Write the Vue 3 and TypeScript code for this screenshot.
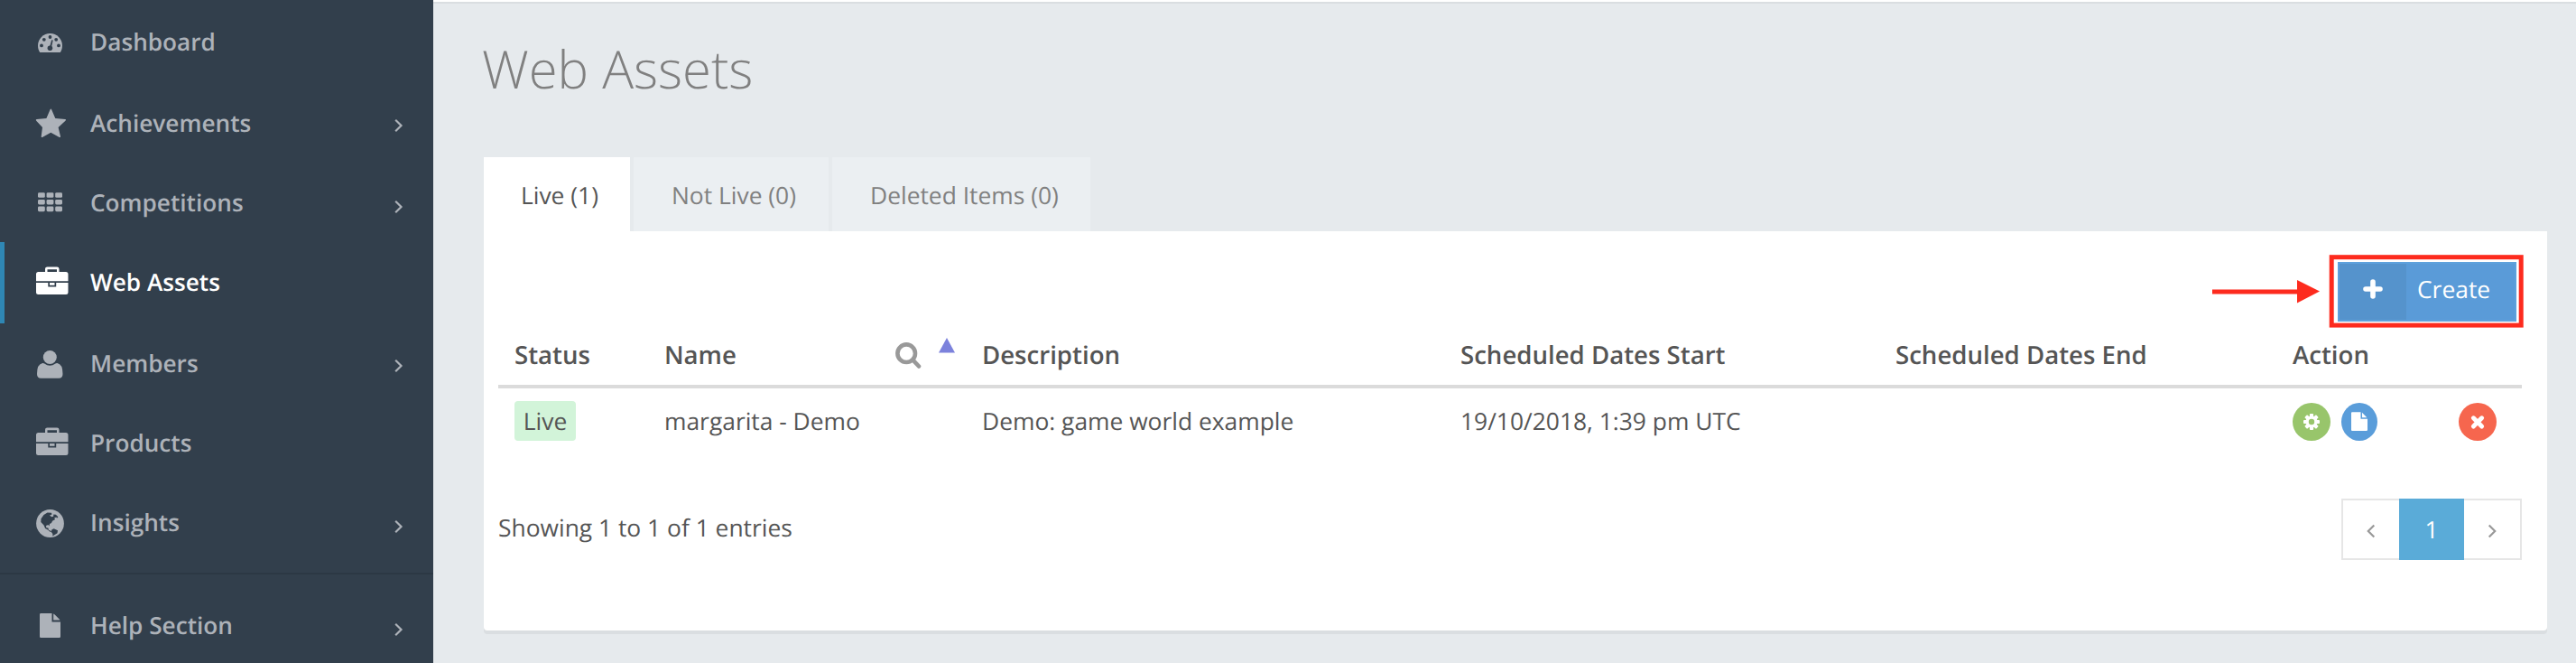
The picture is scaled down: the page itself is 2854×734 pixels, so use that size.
<script setup lang="ts">
interface NavItem {
  label: string
  icon: 'gauge' | 'star' | 'grid' | 'case' | 'user' | 'globe' | 'file'
  arrow?: 'high' | 'low'
  active?: boolean
  tall?: boolean
}

const mainNav: NavItem[] = [
  { label: 'Dashboard', icon: 'gauge', tall: true },
  { label: 'Achievements', icon: 'star', arrow: 'high' },
  { label: 'Competitions', icon: 'grid', arrow: 'low' },
  { label: 'Web Assets', icon: 'case', active: true, tall: true },
  { label: 'Members', icon: 'user', arrow: 'high' },
  { label: 'Products', icon: 'case' },
  { label: 'Insights', icon: 'globe', arrow: 'low' },
]
const helpNav: NavItem[] = [{ label: 'Help Section', icon: 'file', arrow: 'low' }]
const navGroups = [mainNav, helpNav]

const tabs = [
  { label: 'Live (1)', cls: 'live' },
  { label: 'Not Live (0)', cls: 'not-live' },
  { label: 'Deleted Items (0)', cls: 'deleted' },
]

const assets = [
  {
    status: 'Live',
    name: 'margarita - Demo',
    description: 'Demo: game world example',
    start: '19/10/2018, 1:39 pm UTC',
    end: '',
  },
]
const gridCells = [0, 1, 2].flatMap((r) => [0, 1, 2].map((c) => ({ x: 4 + c * 9.6, y: 9.2 + r * 7.7 })))
</script>

<template>
  <div class="app">
    <nav class="sidebar">
      <ul v-for="(group, g) in navGroups" :key="g" class="nav-group">
        <li
          v-for="item in group"
          :key="item.label"
          class="nav-item"
          :class="{ active: item.active, tall: item.tall }"
        >
          <svg class="nav-icon" viewBox="0 0 40 40" fill="currentColor">
            <template v-if="item.icon === 'gauge'">
              <path
                fill-rule="evenodd"
                d="M6.2 32C4.7 29.700 4 27.200 4 24.500 4 17 10 11 17.500 11S31 17 31 24.500c0 2.700-.7 5.200-2.200 7.500z"
              />
              <g class="cut">
                <circle cx="8" cy="24.400" r="1.900" />
                <circle cx="10.800" cy="17.800" r="1.900" />
                <circle cx="17.500" cy="15" r="1.900" />
                <circle cx="24.200" cy="17.800" r="1.900" />
                <circle cx="27" cy="24.400" r="1.900" />
                <circle cx="17.400" cy="27.300" r="2.800" />
                <path d="M19.200 18.200l1.500.4-1.700 8-2-.5z" />
              </g>
            </template>
            <path
              v-else-if="item.icon === 'star'"
              d="M18.300 4.500q.5 0 .8.800l4.200 9.700 11 1.100q1.300.4.400 1.300l-8.100 7.500 2.400 10.200q.1 1.400-1.200.8l-9.500-5.100-9.400 5.100q-1.300.6-1.200-.8l1.300-10.200-7-7.500q-.7-1 .6-1.300l10.800-1.100 4.200-9.700q.3-.8.700-.8z"
            />
            <template v-else-if="item.icon === 'grid'">
              <rect v-for="(c, i) in gridCells" :key="i" :x="c.x" :y="c.y" width="7.800" height="5.600" rx="1.400" />
            </template>
            <template v-else-if="item.icon === 'case'">
              <path
                fill-rule="evenodd"
                d="M12 9V5.800q0-2.300 2.300-2.300h10.900q2.300 0 2.300 2.300V9H35q2.500 0 2.500 2.500v7.800H2v-7.800Q2 9 4.500 9zm2.500 0H25V6.300H14.500z"
              />
              <path d="M2 21h13.300v4.500h8.900V21h13.300v10.500q0 2.500-2.500 2.500H4.500Q2 34 2 31.500z" />
              <rect x="17" y="21" width="5.500" height="2.800" />
            </template>
            <template v-else-if="item.icon === 'user'">
              <circle cx="17.300" cy="13.500" r="7.500" />
              <path
                d="M9.200 20q1-.2 2 .6 6.100 4.400 12.200 0 1-.8 2-.6 6.100 1 6.100 12 0 4.800-4.300 4.800H7.300Q3 36.800 3 32 3 21 9.200 20z"
              />
            </template>
            <template v-else-if="item.icon === 'globe'">
              <circle cx="17.500" cy="21.500" r="15.400" />
              <g class="cut">
                <path
                  d="M7.500 16.300l3-4.300 4-2.500 4.500.2.500 1.700-2.500 1.100 2.200 1.800 2-.5.100-2.300 2.600.2 2.500 2.600-1.400 1.400-.5-1.200-2.400 1 1 1.600-3 1.700-1.100 2.300-2 1-.5 2.400-1.100-1.600-2.400 1 .3 2.400 2.200.3.300 2.200 2.200.8 1.200 1.500-1.700-.4-2.600-2.300-2.800-1.400-1.500-3.500L7.300 20z"
                />
                <path d="M19.500 28.200l2.200-1 4.300 2-.5 3-5.200 3.300.1-2.500-1.800-2.300z" />
              </g>
            </template>
            <path v-else d="M7.200 7h12.300v9.400H29v16.400q0 1.200-1.200 1.200H7.200Q6 34 6 32.800V8.200Q6 7 7.200 7zM21.200 7.500q1 .5 1.800 1.300l4.500 4.400q.8.800 1 1.400h-7.300z" />
          </svg>
          <span class="nav-label">{{ item.label }}</span>
          <svg v-if="item.arrow" class="chevron" :class="item.arrow" viewBox="0 0 10 16">
            <path d="M1.200 1.700l6.300 6.300-6.300 6.300" />
          </svg>
        </li>
      </ul>
    </nav>

    <main class="content">
      <h1 class="title">Web Assets</h1>
      <div class="tabs">
        <div v-for="(tab, i) in tabs" :key="tab.label" class="tab" :class="[tab.cls, { selected: i === 0 }]">
          <span>{{ tab.label }}</span>
        </div>
      </div>

      <section class="panel">
        <div class="toolbar">
          <button class="create">
            <span class="create-icon">
              <svg viewBox="0 0 22 22" width="22" height="22">
                <path d="M11 3v16M3 11h16" />
              </svg>
            </span>
            <span class="create-label"><span>Create</span></span>
          </button>
          <svg class="callout" viewBox="0 0 350 84">
            <rect x="133.200" y="4.700" width="210" height="75.400" />
            <path class="shaft" d="M1 43h96" />
            <path class="tip" d="M95 30l25 12.600L95 55.500z" />
          </svg>
        </div>

        <div class="row head">
          <span>Status</span>
          <span class="name-head">
            <span>Name</span>
            <svg class="search" viewBox="0 0 30 30">
              <circle cx="12.200" cy="12.200" r="9.800" />
              <path d="M19.500 19.700l6.500 6.800" />
            </svg>
            <svg class="sort" viewBox="0 0 18 17"><path d="M9 0l9 16.500H0z" /></svg>
          </span>
          <span>Description</span>
          <span>Scheduled Dates Start</span>
          <span>Scheduled Dates End</span>
          <span>Action</span>
        </div>
        <div v-for="asset in assets" :key="asset.name" class="row body">
          <span><span class="badge">{{ asset.status }}</span></span>
          <span>{{ asset.name }}</span>
          <span>{{ asset.description }}</span>
          <span>{{ asset.start }}</span>
          <span>{{ asset.end }}</span>
          <span class="actions">
            <i class="round green">
              <svg viewBox="0 0 42 42">
                <g fill="#fff">
                  <rect v-for="a in 4" :key="a" x="18.900" y="12" width="4.200" height="18" rx="1" :transform="`rotate(${a * 45} 21 21)`" />
                  <circle cx="21" cy="21" r="6.500" />
                </g>
                <circle cx="21" cy="21" r="3.200" fill="#98c56b" />
              </svg>
            </i>
            <i class="round blue">
              <svg viewBox="0 0 40 42">
                <path
                  fill="#fff"
                  d="M12 10.300h9.500v7.500H29v12q0 1.200-1.200 1.200H12q-1 0-1-1.200V11.300q0-1 1-1zM23 10.800l5.300 5.400H23z"
                />
              </svg>
            </i>
            <i class="round red">
              <svg viewBox="0 0 42 42">
                <path d="M16.400 16.800l9.200 9.200m0-9.200l-9.200 9.200" stroke="#fff" stroke-width="5" stroke-linecap="round" />
              </svg>
            </i>
          </span>
        </div>

        <div class="footer">
          <span class="summary">Showing 1 to 1 of 1 entries</span>
          <div class="pager">
            <span class="page prev">
              <svg viewBox="0 0 10 16"><path d="M8.300 1.500L1.800 8l6.500 6.500" /></svg>
            </span>
            <span class="page current">1</span>
            <span class="page next">
              <svg viewBox="0 0 10 16"><path d="M1.700 1.500L8.200 8l-6.500 6.500" /></svg>
            </span>
          </div>
        </div>
      </section>
    </main>
  </div>
</template>

<style>
body {
  margin: 0;
  overflow: hidden;
}
</style>

<style scoped>
.app {
  display: flex;
  width: 2854px;
  height: 734px;
  box-sizing: border-box;
  background: #e6eaed;
  color: #555;
  font-family: 'Open Sans', 'Noto Sans', sans-serif;
  font-size: 26.4px;
  text-rendering: geometricPrecision;
  overflow: hidden;
}
.sidebar {
  width: 480px;
  flex: none;
  padding-top: 2px;
  box-sizing: border-box;
  background: #323f4c;
  color: #adb2b9;
  font-size: 26.2px;
}
.nav-group {
  list-style: none;
  margin: 0;
  padding: 0;
}
.nav-group + .nav-group {
  margin-top: 12px;
  padding-top: 12px;
  border-top: 2px solid #2c3844;
}
.nav-item {
  display: flex;
  align-items: flex-start;
  height: 88px;
  box-sizing: border-box;
  border-left: 5px solid transparent;
  padding: 0 33px 0 33px;
  font-weight: 600;
}
.nav-item.tall {
  height: 90px;
}
.nav-item.active {
  border-left-color: #2f87b4;
  color: #fff;
}
.nav-icon {
  width: 40px;
  height: 40px;
  margin: 24px 22px 0 0;
}
.cut {
  fill: #323f4c;
}
.nav-label {
  flex: 1;
  line-height: 36px;
  margin-top: 26px;
  white-space: nowrap;
}
.chevron {
  width: 10px;
  height: 16px;
  margin-top: 39px;
  fill: none;
  stroke: currentColor;
  stroke-width: 2.200;
}
.chevron.low {
  margin-top: 41px;
}
.content {
  flex: 1;
  min-width: 0;
  border-top: 2px solid #fff;
  box-shadow: inset 0 2px #dadee1;
  padding: 0 32px 0 56px;
}
.title {
  margin: 0 0 0 -2px;
  height: 172px;
  padding-top: 34px;
  box-sizing: border-box;
  font-size: 58px;
  line-height: 80px;
  font-weight: 300;
  color: #808080;
  white-space: nowrap;
}
.tabs {
  display: flex;
  gap: 4px;
  height: 82px;
}
.tab {
  box-sizing: border-box;
  padding-left: 42px;
  line-height: 84px;
  background: #ebeff2;
  color: #808080;
  white-space: nowrap;
}
.tab.selected {
  background: #fff;
  color: #555;
  padding-left: 41px;
}
.live {
  width: 162px;
}
.not-live {
  width: 216px;
}
.deleted {
  width: 286px;
}
.panel {
  height: 442px;
  box-sizing: border-box;
  padding: 34px 28px 0 16px;
  background: #fff;
  border-radius: 0 0 4px 4px;
  box-shadow: 0 4px #dadee1;
}
.toolbar {
  position: relative;
  display: flex;
  justify-content: flex-end;
  height: 66px;
  padding-right: 6px;
}
.create {
  display: flex;
  width: 198px;
  height: 66px;
  box-sizing: border-box;
  padding: 0;
  border: 2px solid #5ea1dc;
  background: #5a9bd8;
  color: #fff;
  font: inherit;
  text-rendering: inherit;
}
.create-icon {
  display: flex;
  align-items: center;
  justify-content: center;
  width: 74px;
  height: 62px;
  padding-bottom: 6px;
  box-sizing: border-box;
  background: #5593cc;
}
.create-icon path {
  stroke: #fff;
  stroke-width: 5.600;
  stroke-linecap: round;
}
.create-label {
  padding-left: 12px;
  line-height: 56px;
}
.callout {
  position: absolute;
  right: -6px;
  top: -10px;
  width: 350px;
  height: 84px;
  fill: none;
  stroke: #fd2b1e;
  stroke-width: 5;
}
.callout .tip {
  fill: #fd2b1e;
  stroke: none;
}
.row {
  display: grid;
  grid-template-columns: 166px 352px 530px 482px 440px 254px;
  padding-left: 18px;
  white-space: nowrap;
}
.head {
  height: 74px;
  box-sizing: border-box;
  border-bottom: 4px solid #dbdbdb;
  font-size: 27.6px;
  font-weight: 600;
  line-height: 36px;
  padding-top: 19px;
}
.name-head {
  display: flex;
  align-items: flex-start;
}
.name-head > span {
  width: 256px;
}
.search {
  width: 30px;
  height: 30px;
  margin: 4px 18px 0 0;
  fill: none;
  stroke: #999;
  stroke-width: 4.600;
  stroke-linecap: round;
}
.sort {
  width: 18px;
  height: 17px;
  margin-top: -1px;
  fill: #7c82dc;
}
.body {
  height: 90px;
  line-height: 36px;
  padding-top: 18px;
  box-sizing: border-box;
}
.badge {
  display: block;
  width: 68px;
  height: 44px;
  margin-top: -4px;
  line-height: 44px;
  text-align: center;
  border-radius: 4px;
  background: #d2f4d9;
}
.actions {
  display: flex;
  margin-top: -2px;
}
.round {
  display: block;
  width: 42px;
  height: 42px;
  border-radius: 50%;
}
.round svg {
  display: block;
  width: 100%;
  height: 100%;
}
.green {
  background: #98c56b;
  margin-right: 12px;
}
.blue {
  width: 40px;
  background: #5a9dda;
  margin-right: 90px;
}
.red {
  background: #f6664e;
}
.footer {
  display: flex;
  justify-content: space-between;
  padding-top: 32px;
}
.summary {
  line-height: 36px;
  margin-top: 14px;
}
.pager {
  display: flex;
  width: 200px;
  height: 68px;
}
.page {
  display: flex;
  align-items: center;
  justify-content: center;
  width: 64px;
  box-sizing: border-box;
  border: 2px solid #e6e6e6;
}
.page svg {
  width: 10px;
  height: 16px;
  margin-top: 3px;
  fill: none;
  stroke: #999;
  stroke-width: 2.200;
}
.prev {
  border-right: 0;
}
.next {
  border-left: 0;
}
.current {
  width: 72px;
  border: 0;
  background: #5aabd8;
  color: #fff;
}
</style>
